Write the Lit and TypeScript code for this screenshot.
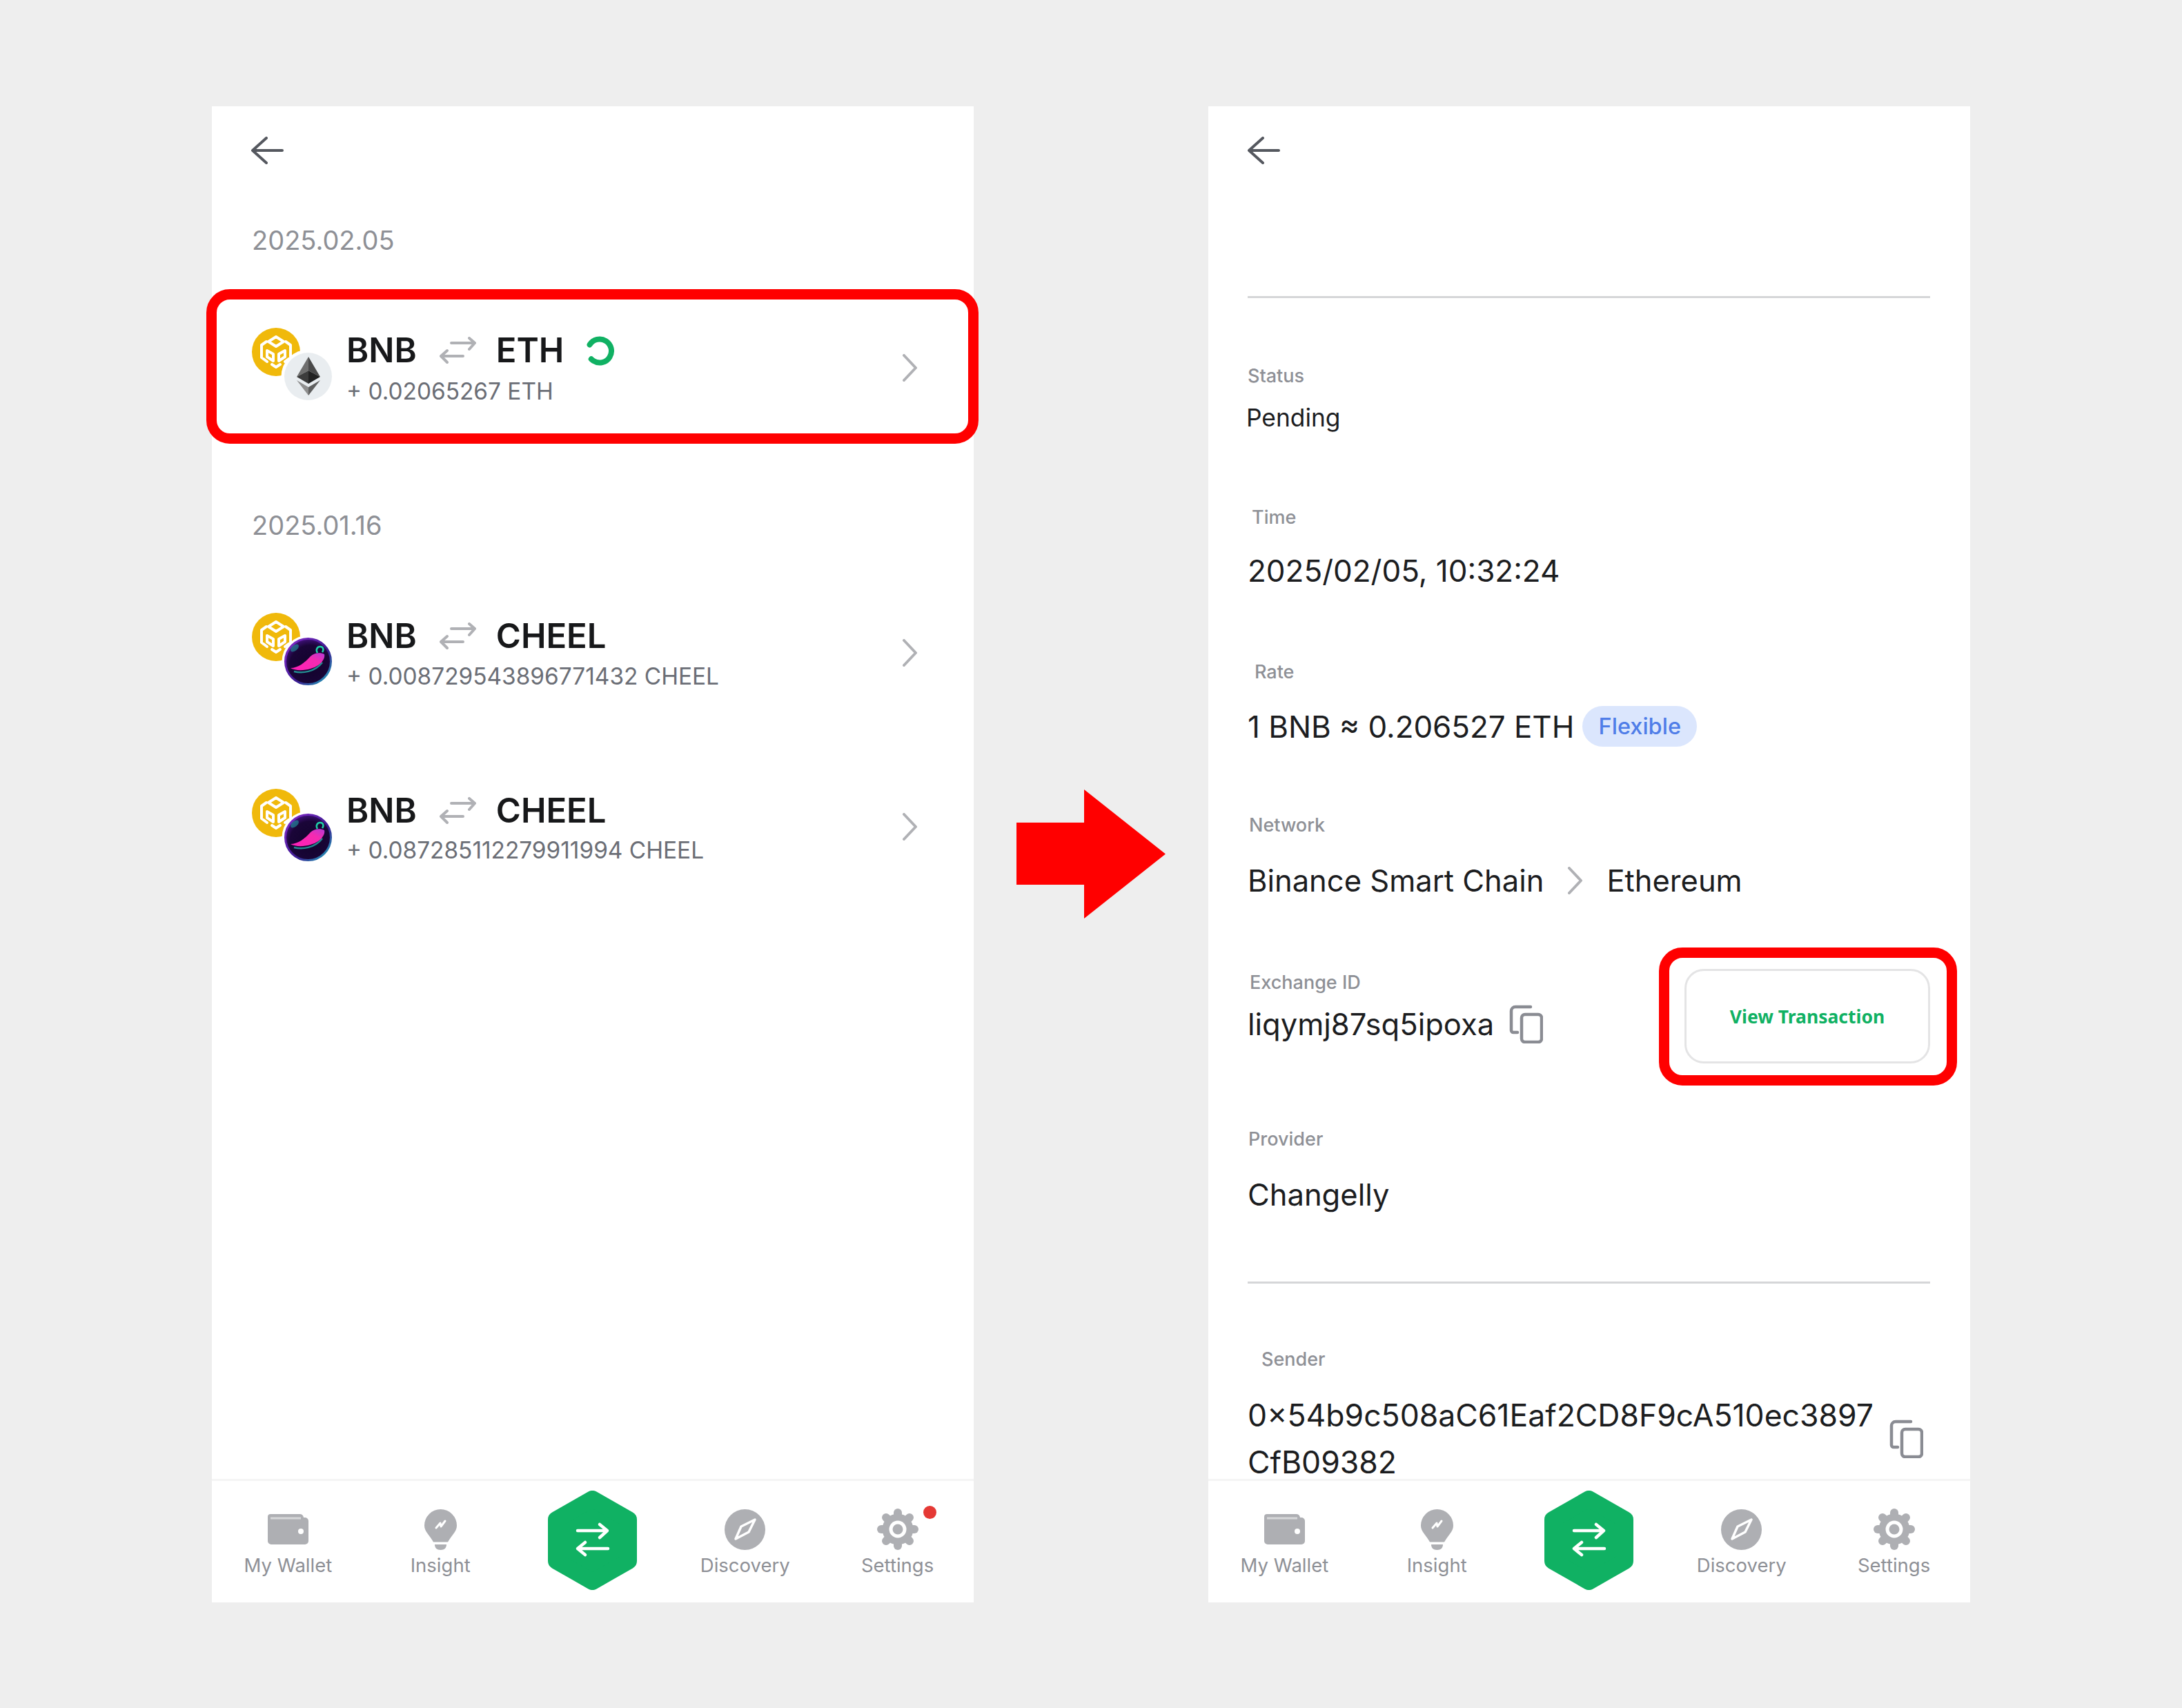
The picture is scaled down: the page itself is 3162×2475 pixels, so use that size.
import { LitElement, html, svg, css, TemplateResult } from 'lit'
import { customElement } from 'lit/decorators.js'

const GREY = '#aeafb3'

const backIcon = () => html`<svg class="back" width="47" height="40" viewBox="0 0 47 40" fill="none" stroke="#55585f" stroke-width="4" stroke-linecap="round" stroke-linejoin="round"><path d="M22 2 2 20l20 18M3 20h42"/></svg>`

const chevron = () => html`<svg class="chevron" width="23" height="40" viewBox="0 0 23 40" fill="none" stroke="#b0b1b5" stroke-width="4" stroke-linecap="round" stroke-linejoin="round"><path d="m3 2 17 18L3 38"/></svg>`

const swapIcon = () => html`<svg class="swap" width="55" height="40" viewBox="0 0 55 40" fill="none" stroke="#b0b1b5" stroke-width="4" stroke-linecap="round" stroke-linejoin="round"><path d="M18 9h33M44 2l8 7-8 9M3 28h32M12 20l-9 8 9 9"/></svg>`

const spinner = () => html`<svg class="spinner" width="44" height="47" viewBox="0 0 44 47" fill="none"><circle cx="20" cy="24.500" r="17" stroke="#10b163" stroke-width="8" stroke-linecap="round" pathLength="100" stroke-dasharray="79 21" transform="rotate(212 20 24.500)"/></svg>`

const copyIcon = (cls: string) => html`<svg class=${cls} width="49" height="56" viewBox="0 0 49 56" fill="none" stroke="#8a8c93" stroke-width="4.500" stroke-linejoin="round" stroke-linecap="round"><path d="M31 3H9a6 6 0 0 0-6 6v28a3 3 0 0 0 3 3h6"/><rect x="18" y="14" width="29" height="40" rx="5"/></svg>`

const bnbLogo = () => html`<svg class="coin" width="70" height="70" viewBox="0 0 70 70" fill="none">
  <circle cx="35" cy="35" r="35" fill="#f0b90b"/>
  <g stroke="#fff" stroke-width="4" stroke-linejoin="round" stroke-linecap="round">
    <path d="M35 13l11 7-11 7-11-7zM21 20l-7 5v18l8 6M49 20l7 5v18l-8 6M22 33l9 5v10l-9-6zM48 33l-9 5v10l9-6zM29 53l6 4 6-4"/>
  </g>
</svg>`

const ethLogo = () => html`<svg class="pair" width="79" height="79" viewBox="-5 -5 79 79">
  <circle cx="34.5" cy="34.5" r="39" fill="#fff"/>
  <circle cx="34.5" cy="34.5" r="34.5" fill="#e9edf0"/>
  <path d="M35 6v20L18 35z" fill="#6f6f6f"/>
  <path d="M35 6v20l17 9z" fill="#4a4a4a"/>
  <path d="M35 26 18 35l17 10z" fill="#3c3c3c"/>
  <path d="M35 26l17 9-17 10z" fill="#222"/>
  <path d="M18 40l17 22V50z" fill="#8f8f8f"/>
  <path d="M52 40 35 62V50z" fill="#5f5f5f"/>
</svg>`

const cheelLogo = (id: string) => html`<svg class="pair" width="79" height="79" viewBox="-5 -5 79 79" fill="none">
  <defs>
    <radialGradient id="${id}-bg" cx="55%" cy="60%" r="65%"><stop offset="0" stop-color="#12032c"/><stop offset=".7" stop-color="#1a0538"/><stop offset="1" stop-color="#4c1590"/></radialGradient>
    <linearGradient id="${id}-rim" x1="0" y1="0" x2="1" y2="1"><stop offset="0" stop-color="#8a2bd0"/><stop offset=".6" stop-color="#3a1a90"/><stop offset="1" stop-color="#1fb7c0"/></linearGradient>
    <linearGradient id="${id}-chili" x1="0" y1="1" x2="1" y2="0"><stop offset="0" stop-color="#ff1fb8"/><stop offset=".65" stop-color="#f52bb0"/><stop offset="1" stop-color="#b53ad6"/></linearGradient>
  </defs>
  <circle cx="34.5" cy="34.5" r="38" fill="#fff"/>
  <circle cx="34.5" cy="34.5" r="33" fill="url(#${id}-bg)" stroke="url(#${id}-rim)" stroke-width="3"/>
  <ellipse cx="15" cy="15" rx="7" ry="4" fill="#1fa8a8" opacity=".55" transform="rotate(-40 15 15)"/>
  <path d="M14 49c12 3 30 1 41-13" stroke="#2ab7b0" stroke-width="2.500" opacity=".75"/>
  <path d="M9 44c11 0 21-8 29-17 5-5 14-6 20-3 2 8-8 18-20 21-10 3-22 3-29-1z" fill="url(#${id}-chili)"/>
  <path d="M48 22c-3-5 0-9 4-9s6 4 3 8" stroke="#1fd0a8" stroke-width="2.500"/>
</svg>`

const walletIcon = () => html`<svg width="59" height="44" viewBox="0 0 59 44">
  <path d="M4 0h42a6 6 0 0 1 6 5h2a5 5 0 0 1 5 5v29a5 5 0 0 1-5 5H5a5 5 0 0 1-5-5V4a4 4 0 0 1 4-4z" fill="${GREY}"/>
  <rect x="4" y="4.500" width="44" height="3" fill="#d6d7d9"/>
  <circle cx="48" cy="25" r="4" fill="#fff"/>
</svg>`

const insightIcon = () => html`<svg width="47" height="59" viewBox="0 0 47 59">
  <path d="M23.500 0A23.500 23.500 0 0 1 47 23.500c0 9-7 13-13 24H13C7 36.500 0 32.500 0 23.500A23.500 23.500 0 0 1 23.500 0z" fill="${GREY}"/>
  <path d="M15 51h17c0 5-3 8-8.500 8S15 56 15 51z" fill="${GREY}"/>
  <path d="M17 27l6-7 1 5 6-8" fill="none" stroke="#fff" stroke-width="3" stroke-linecap="round" stroke-linejoin="round"/>
</svg>`

const swapHex = () => html`<svg class="hex" width="129" height="144" viewBox="0 0 129 144">
  <path d="M64.500 12 117 42v60L64.500 132 12 102V42z" fill="#10b163" stroke="#10b163" stroke-width="24" stroke-linejoin="round"/>
  <path d="M43 58h42M75 49l11 9-11 10M87 84H45M54 75l-11 9 11 9" fill="none" stroke="#fff" stroke-width="4.500" stroke-linecap="round" stroke-linejoin="round"/>
</svg>`

const discoveryIcon = () => html`<svg width="59" height="59" viewBox="0 0 59 59">
  <circle cx="29.500" cy="29.500" r="29.500" fill="${GREY}"/>
  <path d="M44 15 35 33 16 43l8-18z" fill="none" stroke="#fff" stroke-width="3.500" stroke-linejoin="round"/>
</svg>`

const settingsIcon = () => html`<svg width="60" height="60" viewBox="0 0 60 60">
  ${[0, 45, 90, 135].map(a => svg`<rect x="24" y="0" width="12" height="60" rx="6" fill="${GREY}" transform="rotate(${a} 30 30)"/>`)}
  <circle cx="30" cy="30" r="22.500" fill="${GREY}"/>
  <circle cx="30" cy="30" r="12.500" fill="#fff"/>
  <circle cx="30" cy="30" r="7.500" fill="${GREY}"/>
</svg>`

interface SwapRow {
  to: string
  amount: string
  logo: TemplateResult
  pending?: boolean
}

@customElement('swap-list')
export class SwapList extends LitElement {
  static styles = css`
    :host {
      display: block;
    }
    .date {
      margin: 0 58px;
      height: 50px;
      line-height: 50px;
      font-size: 38px;
      color: #8e9096;
    }
    .date.first {
      margin-top: 85px;
    }
    .date.second {
      margin-top: 143px;
    }
    .row {
      position: relative;
      display: flex;
      height: 120px;
      padding: 0 58px;
      margin-top: 100px;
    }
    .row + .row {
      margin-top: 132px;
    }
    .row.marked::after {
      content: '';
      position: absolute;
      inset: -54px -7px -50px -8px;
      border: 15px solid #ff0000;
      border-radius: 34px;
    }
    .logos {
      position: relative;
      flex: none;
      width: 116px;
      height: 104px;
      margin-top: 2px;
    }
    .row + .row .logos {
      margin-top: 5px;
    }
    .coin {
      position: absolute;
      left: 0;
      top: 0;
    }
    .pair {
      position: absolute;
      left: 42px;
      top: 31px;
    }
    .text {
      flex: 1;
      margin-left: 21px;
    }
    .title {
      display: flex;
      align-items: center;
      height: 60px;
      margin-top: 5px;
      font-size: 49px;
      font-weight: 600;
      color: #17181a;
    }
    .second ~ .row .title {
      margin-top: 6px;
    }
    .row + .row .title {
      margin-top: 7px;
    }
    .swap {
      margin: 0 28px 0 32px;
    }
    .spinner {
      margin-left: 32px;
    }
    .amount {
      height: 44px;
      line-height: 44px;
      margin-top: 7px;
      font-size: 33.400px;
      color: #6b6e76;
    }
    .second ~ .row .amount {
      margin-top: 6px;
    }
    .row + .row .amount {
      margin-top: 5px;
    }
    .chevron {
      align-self: center;
      flex: none;
      margin-right: 23px;
    }
  `

  private rows: SwapRow[][] = [
    [{ to: 'ETH', amount: '+ 0.02065267 ETH', logo: ethLogo(), pending: true }],
    [
      { to: 'CHEEL', amount: '+ 0.008729543896771432 CHEEL', logo: cheelLogo('c1') },
      { to: 'CHEEL', amount: '+ 0.087285112279911994 CHEEL', logo: cheelLogo('c2') },
    ],
  ]

  private renderRow(row: SwapRow) {
    return html`
      <div class="row ${row.pending ? 'marked' : ''}">
        <div class="logos">${bnbLogo()}${row.logo}</div>
        <div class="text">
          <div class="title">BNB ${swapIcon()} ${row.to} ${row.pending ? spinner() : ''}</div>
          <div class="amount">${row.amount}</div>
        </div>
        ${chevron()}
      </div>
    `
  }

  render() {
    return html`
      <div class="date first">2025.02.05</div>
      ${this.rows[0].map(r => this.renderRow(r))}
      <div class="date second">2025.01.16</div>
      ${this.rows[1].map(r => this.renderRow(r))}
    `
  }
}

@customElement('swap-detail')
export class SwapDetail extends LitElement {
  static styles = css`
    :host {
      display: block;
      padding: 0 58px 0 57px;
    }
    .rule {
      height: 3px;
      background: #d5d6d8;
    }
    .rule.top {
      margin-top: 191px;
    }
    .rule.bottom {
      margin-top: 96px;
    }
    .label {
      height: 40px;
      line-height: 40px;
      font-size: 27px;
      font-weight: 500;
      color: #8e9096;
    }
    .value {
      display: flex;
      align-items: center;
      height: 60px;
      font-size: 43.500px;
      color: #1c1d1f;
    }
    .status {
      margin-top: 93px;
    }
    .status .value {
      margin: 11px 0 0 -2px;
      font-size: 35.300px;
    }
    .time {
      margin-top: 94px;
    }
    .time .label {
      padding-left: 6px;
    }
    .time .value {
      margin-top: 27px;
      font-size: 44px;
    }
    .rate {
      margin-top: 97px;
    }
    .rate .label {
      padding-left: 10px;
    }
    .rate .value {
      margin-top: 29px;
      font-size: 43.900px;
    }
    .pill {
      width: 166px;
      height: 59px;
      margin-left: 12px;
      border-radius: 30px;
      background: #dbe6fd;
      color: #4f7de8;
      font-size: 32.500px;
      font-weight: 500;
      line-height: 59px;
      text-align: center;
    }
    .network {
      margin-top: 93px;
    }
    .network .label {
      padding-left: 2px;
    }
    .network .value {
      margin-top: 30px;
    }
    .network .chevron {
      margin: 0 34px;
    }
    .exchange {
      display: flex;
      justify-content: space-between;
      margin-top: 98px;
    }
    .exchange .label {
      padding-left: 3px;
    }
    .exchange .value {
      margin-top: 10px;
    }
    .copy-id {
      margin-left: 22px;
    }
    .view {
      position: relative;
      box-sizing: border-box;
      width: 356px;
      height: 137px;
      border: 3px solid #e4e4e5;
      border-radius: 28px;
      font-family: 'Noto Sans', sans-serif;
      font-size: 26.500px;
      font-weight: 700;
      color: #10b163;
      line-height: 133px;
      text-align: center;
    }
    .view::after {
      content: '';
      position: absolute;
      inset: -34px -42px -35px -40px;
      border: 15px solid #ff0000;
      border-radius: 34px;
    }
    .provider {
      margin-top: 90px;
    }
    .provider .label {
      padding-left: 1px;
    }
    .provider .value {
      margin-top: 30px;
    }
    .sender {
      margin-top: 90px;
    }
    .sender .label {
      padding-left: 20px;
    }
    .address {
      display: flex;
      align-items: center;
      justify-content: space-between;
      margin-top: 27px;
      font-size: 44.500px;
      line-height: 68px;
      color: #1c1d1f;
    }
    .address span {
      white-space: nowrap;
    }
    .copy-address {
      margin-right: 10px;
    }
  `

  render() {
    return html`
      <div class="rule top"></div>
      <div class="status">
        <div class="label">Status</div>
        <div class="value">Pending</div>
      </div>
      <div class="time">
        <div class="label">Time</div>
        <div class="value">2025/02/05, 10:32:24</div>
      </div>
      <div class="rate">
        <div class="label">Rate</div>
        <div class="value">1 BNB ≈ 0.206527 ETH <span class="pill">Flexible</span></div>
      </div>
      <div class="network">
        <div class="label">Network</div>
        <div class="value">Binance Smart Chain ${chevron()} Ethereum</div>
      </div>
      <div class="exchange">
        <div>
          <div class="label">Exchange ID</div>
          <div class="value">liqymj87sq5ipoxa ${copyIcon('copy-id')}</div>
        </div>
        <div class="view">View Transaction</div>
      </div>
      <div class="provider">
        <div class="label">Provider</div>
        <div class="value">Changelly</div>
      </div>
      <div class="rule bottom"></div>
      <div class="sender">
        <div class="label">Sender</div>
        <div class="address">
          <span>0×54b9c508aC61Eaf2CD8F9cA510ec3897<br />CfB09382</span>
          ${copyIcon('copy-address')}
        </div>
      </div>
    `
  }
}

@customElement('bottom-nav')
export class BottomNav extends LitElement {
  static properties = { dot: { type: Boolean } }
  dot = false

  static styles = css`
    :host {
      display: grid;
      grid-template-columns: repeat(5, 1fr);
      flex: none;
      box-sizing: border-box;
      height: 179px;
      border-top: 3px solid #f5f5f5;
      background: #fff;
    }
    .item {
      display: flex;
      flex-direction: column;
      align-items: center;
      padding-top: 41px;
    }
    .icon {
      position: relative;
      display: flex;
      align-items: center;
      height: 59px;
    }
    .label {
      height: 36px;
      margin-top: 4px;
      line-height: 36px;
      font-size: 27.500px;
      color: #8e9096;
    }
    .center {
      display: flex;
      align-items: center;
      justify-content: center;
      padding-bottom: 3px;
    }
    .dot {
      position: absolute;
      left: 67px;
      top: -5px;
      width: 19px;
      height: 19px;
      border-radius: 50%;
      background: #e53935;
    }
  `

  private item(icon: TemplateResult, label: string, badge = false) {
    return html`
      <div class="item">
        <div class="icon">${icon}${badge ? html`<span class="dot"></span>` : ''}</div>
        <div class="label">${label}</div>
      </div>
    `
  }

  render() {
    return html`
      ${this.item(walletIcon(), 'My Wallet')}
      ${this.item(insightIcon(), 'Insight')}
      <div class="center">${swapHex()}</div>
      ${this.item(discoveryIcon(), 'Discovery')}
      ${this.item(settingsIcon(), 'Settings', this.dot)}
    `
  }
}

@customElement('app-root')
export class AppRoot extends LitElement {
  static styles = css`
    :host {
      display: flex;
      align-items: center;
      justify-content: center;
      width: 3162px;
      height: 2475px;
      background: #eeeeee;
      font-family: Inter, 'Liberation Sans', sans-serif;
    }
    .phone {
      display: flex;
      flex-direction: column;
      width: 1104px;
      height: 2168px;
      background: #fff;
    }
    .header {
      flex: none;
      height: 40px;
      padding: 44px 0 0 57px;
    }
    .back {
      display: block;
    }
    .body {
      flex: 1;
      min-height: 0;
    }
    .arrow {
      flex: none;
      margin: 0 62px;
    }
  `

  render() {
    return html`
      <section class="phone">
        <div class="body">
          <div class="header">${backIcon()}</div>
          <swap-list></swap-list>
        </div>
        <bottom-nav dot></bottom-nav>
      </section>
      <svg class="arrow" width="216" height="187" viewBox="0 0 216 187"><path d="M0 48h98V0l118 93.500L98 187v-49H0z" fill="#ff0000"/></svg>
      <section class="phone">
        <div class="body">
          <div class="header">${backIcon()}</div>
          <swap-detail></swap-detail>
        </div>
        <bottom-nav></bottom-nav>
      </section>
    `
  }
}
